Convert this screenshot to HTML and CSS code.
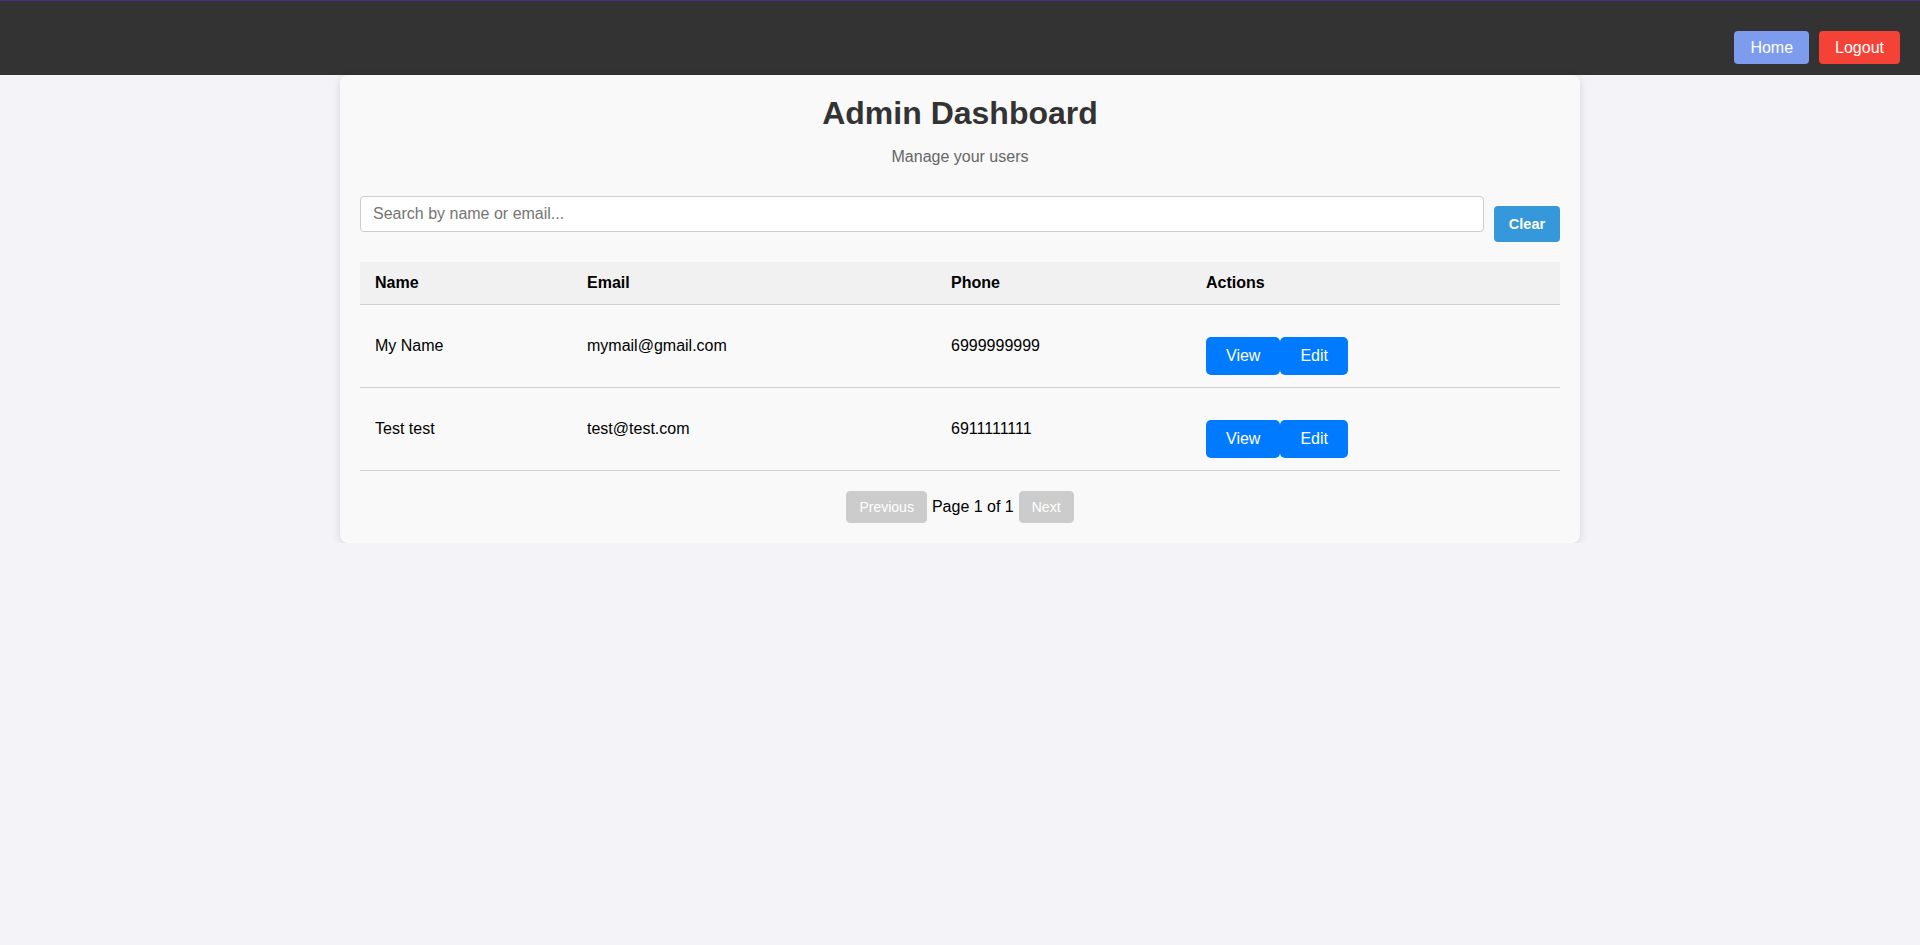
FILE: index.html
```html
<!DOCTYPE html>
<html lang="en">
<head>
<meta charset="utf-8">
<title>Admin Dashboard</title>
<link rel="stylesheet" href="styles.css">
</head>
<body>
<header class="topbar">
  <nav class="topnav">
    <button class="nav-btn nav-home">Home</button>
    <button class="nav-btn nav-logout">Logout</button>
  </nav>
</header>
<main class="card">
  <h1 class="title">Admin Dashboard</h1>
  <p class="subtitle">Manage your users</p>
  <div class="search-row">
    <input class="search-input" type="text" placeholder="Search by name or email...">
    <button class="clear-btn">Clear</button>
  </div>
  <table class="users">
    <thead>
      <tr>
        <th class="c-name">Name</th>
        <th class="c-email">Email</th>
        <th class="c-phone">Phone</th>
        <th class="c-actions">Actions</th>
      </tr>
    </thead>
    <tbody>
      <tr>
        <td>My Name</td>
        <td>mymail@gmail.com</td>
        <td>6999999999</td>
        <td><div class="actions"><button class="act-btn">View</button><button class="act-btn">Edit</button></div></td>
      </tr>
      <tr>
        <td>Test test</td>
        <td>test@test.com</td>
        <td>6911111111</td>
        <td><div class="actions"><button class="act-btn">View</button><button class="act-btn">Edit</button></div></td>
      </tr>
    </tbody>
  </table>
  <div class="pagination">
    <button class="page-btn" disabled>Previous</button>
    <span class="page-info">Page 1 of 1</span>
    <button class="page-btn" disabled>Next</button>
  </div>
</main>
</body>
</html>
```
FILE: styles.css
```css
* { box-sizing: border-box; }

html, body {
  margin: 0;
  padding: 0;
}

body {
  background: #f4f4f8;
  font-family: "Liberation Sans", Arial, sans-serif;
  color: #000;
}

.topbar {
  background: #333333;
  border-top: 1px solid #4b2a87;
  height: 75px;
  padding: 30px 20px 0 20px;
}

.topnav {
  display: flex;
  justify-content: flex-end;
  gap: 10px;
}

.nav-btn {
  font-family: inherit;
  font-size: 16px;
  line-height: 19px;
  color: #fff;
  border: none;
  border-radius: 4px;
  padding: 7px 16px;
  height: 33px;
  cursor: pointer;
}

.nav-home { background: #7e9cee; }
.nav-logout { background: #f44336; }

.card {
  width: 1240px;
  margin: 0 auto;
  background: #f9f9f9;
  border-radius: 8px;
  box-shadow: 0 2px 10px rgba(0, 0, 0, 0.12);
  padding: 20px 20px 20px 20px;
}

.title {
  margin: 0;
  font-size: 32px;
  font-weight: bold;
  color: #333;
  text-align: center;
}

.subtitle {
  margin: 16px 0 30px 0;
  font-size: 16px;
  color: #666;
  text-align: center;
}

.search-row {
  display: flex;
  align-items: center;
  margin-bottom: 10px;
}

.search-input {
  flex: 1;
  height: 36px;
  margin-bottom: 20px;
  padding: 8px 12px;
  font-family: inherit;
  font-size: 16px;
  border: 1px solid #ccc;
  border-radius: 4px;
  background: #fff;
  color: #333;
}

.search-input::placeholder { color: #757575; }

.clear-btn {
  margin-left: 10px;
  width: 66px;
  height: 36px;
  padding: 0;
  font-family: inherit;
  font-size: 14.5px;
  font-weight: bold;
  color: #fff;
  background: #3498db;
  border: none;
  border-radius: 4px;
}

.users {
  width: 100%;
  border-collapse: collapse;
  font-size: 16px;
}

.users th,
.users td {
  text-align: left;
  padding: 12px 15px;
  border-bottom: 1px solid #d0d0d0;
  vertical-align: middle;
  line-height: 18px;
}

.users th {
  background: #f1f1f1;
  font-weight: bold;
}

.c-name { width: 212px; }
.c-email { width: 364px; }
.c-phone { width: 255px; }

.actions {
  display: flex;
  margin-top: 20px;
}

.act-btn {
  font-family: inherit;
  font-size: 16px;
  line-height: 18px;
  padding: 10px 20px;
  color: #fff;
  background: #007bff;
  border: none;
  border-radius: 5px;
}

.pagination {
  display: flex;
  justify-content: center;
  align-items: center;
  gap: 5px;
  margin-top: 20px;
}

.page-btn {
  font-family: inherit;
  font-size: 14px;
  line-height: 16px;
  padding: 7px 12px;
  color: #fff;
  background: #cccccc;
  border: 1px solid #cccccc;
  border-radius: 4px;
}

.page-info {
  font-size: 16px;
  color: #000;
}
```
